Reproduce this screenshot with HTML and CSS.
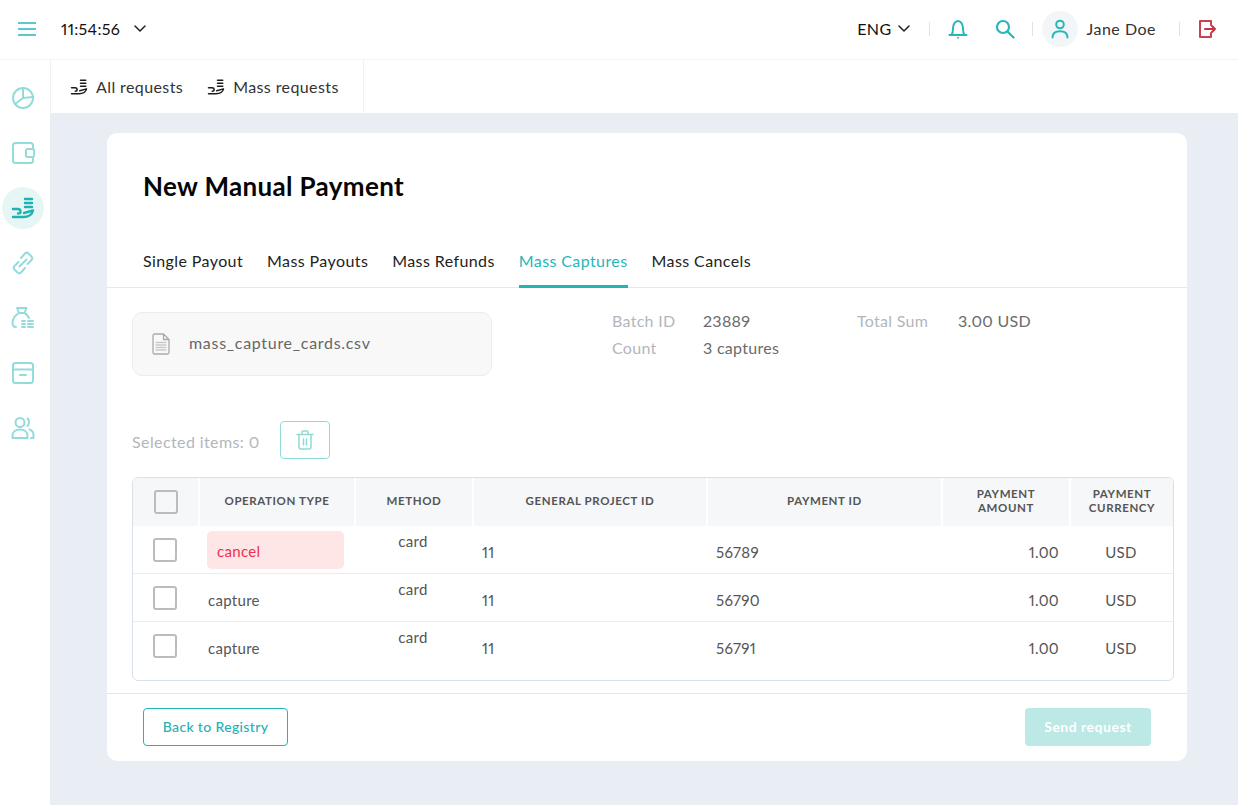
FILE: index.html
```html
<!DOCTYPE html>
<html lang="en">
<head>
<meta charset="UTF-8">
<title>New Manual Payment</title>
<link rel="stylesheet" href="styles.css">
</head>
<body>
<header class="topbar">
  <div class="topbar-left">
    <svg class="burger" width="18" height="14" viewBox="0 0 18 14"><path d="M0 1h18M0 7h18M0 13h18"/></svg>
    <span class="clock">11:54:56</span>
    <svg class="chev" width="12" height="7" viewBox="0 0 12 7"><path d="M1 1l5 5 5-5"/></svg>
  </div>
  <div class="topbar-right">
    <span class="lang">ENG</span>
    <svg class="chev chev-lang" width="12" height="7" viewBox="0 0 12 7"><path d="M1 1l5 5 5-5"/></svg>
    <span class="sep sep-a"></span>
    <svg class="ico-bell" width="20" height="20" viewBox="0 0 20 20"><path d="M1.5 16h17M3.5 16c1.5-2 1.5-3 1.5-6.500C5 5.500 7 2 10 2s5 3.500 5 7.500c0 3.500 0 4.500 1.500 6.500"/><circle class="dot" cx="10" cy="18.800" r="1"/></svg>
    <svg class="ico-search" width="20" height="20" viewBox="0 0 20 20"><circle cx="8" cy="8" r="6"/><path d="M12.500 12.500l6 6"/></svg>
    <span class="sep sep-b"></span>
    <span class="avatar">
      <svg width="18" height="20" viewBox="0 0 18 20"><circle cx="9" cy="5.500" r="3.800"/><path d="M1.500 18.500c0-4 3-6.200 7.500-6.200s7.500 2.200 7.500 6.200"/></svg>
    </span>
    <span class="user">Jane Doe</span>
    <span class="sep sep-c"></span>
    <svg class="ico-exit" width="17" height="18" viewBox="0 0 17 18"><path d="M12 5V1H1v16h11v-4"/><path class="arrow" d="M6 9h10M13 6l3 3-3 3"/></svg>
  </div>
</header>

<div class="shell">
  <nav class="sidebar">
    <span class="side-item">
      <svg width="24" height="24" viewBox="0 0 24 24"><circle cx="12" cy="12" r="10"/><path d="M12 2v10l-8 6M12 12l10-1"/></svg>
    </span>
    <span class="side-item">
      <svg width="24" height="24" viewBox="0 0 24 24"><path d="M22 7V4.500A2.500 2.500 0 0 0 19.500 2h-15A2.500 2.500 0 0 0 2 4.500v15A2.500 2.500 0 0 0 4.500 22h15a2.500 2.500 0 0 0 2.500-2.500V17"/><rect x="15" y="8" width="8" height="8" rx="1.500"/></svg>
    </span>
    <span class="side-item active">
      <svg width="24" height="24" viewBox="0 0 24 24"><path d="M14 3h7M14 7h7M14 11h7M2 13h5c2 0 2.500 1 2.500 3 0 1-1 1.500-2.500 1.500M2 21h10c5 0 9-2 10-6.500L13 17"/></svg>
    </span>
    <span class="side-item">
      <svg width="24" height="24" viewBox="0 0 24 24"><path d="M10 7l4-4.500c1-1 2.500-1 3.500 0l3 3c1 1 1 2.500 0 3.500l-4 4M14 17l-4 4.500c-1 1-2.500 1-3.500 0l-3-3c-1-1-1-2.500 0-3.500l4-4M8.500 15.500l7-7"/></svg>
    </span>
    <span class="side-item">
      <svg width="24" height="24" viewBox="0 0 24 24"><path d="M6 2h9.500l-2 5h-5.500zM8 7C4 9.500 1.500 13.500 1.500 17c0 2.500 1.500 4 3.500 4M13.500 7c2 1 3.500 3 4.500 5M11 15h3M17 15h5M11 18h3M17 18h5M11 21h3M17 21h5"/></svg>
    </span>
    <span class="side-item">
      <svg width="24" height="24" viewBox="0 0 24 24"><rect x="2" y="2" width="20" height="20" rx="2.500"/><path d="M2 8.500h20M9 14h6"/></svg>
    </span>
    <span class="side-item">
      <svg width="24" height="24" viewBox="0 0 24 24"><circle cx="9" cy="6.500" r="4.500"/><path d="M1.500 22v-2.500c0-3.500 3-6 7.500-6s7.500 2.500 7.500 6V22zM16.500 2.500c2 1 2 6 0 7.500M18.500 13.500c2.500 1 4 3 4 5.500v3h-2.500"/></svg>
    </span>
  </nav>

  <div class="content">
    <div class="subnav">
      <div class="subnav-items">
        <a class="subnav-item">
          <svg width="18" height="18" viewBox="0 0 24 24"><path d="M14 3h7M14 7h7M14 11h7M2 13h5c2 0 2.500 1 2.500 3 0 1-1 1.500-2.500 1.500M2 21h10c5 0 9-2 10-6.500L13 17"/></svg>
          All requests
        </a>
        <a class="subnav-item">
          <svg width="18" height="18" viewBox="0 0 24 24"><path d="M14 3h7M14 7h7M14 11h7M2 13h5c2 0 2.500 1 2.500 3 0 1-1 1.500-2.500 1.500M2 21h10c5 0 9-2 10-6.500L13 17"/></svg>
          Mass requests
        </a>
      </div>
    </div>

    <main class="main">
      <section class="card">
        <h1 class="title">New Manual Payment</h1>
        <div class="tabs">
          <a class="tab">Single Payout</a>
          <a class="tab">Mass Payouts</a>
          <a class="tab">Mass Refunds</a>
          <a class="tab tab-active">Mass Captures</a>
          <a class="tab">Mass Cancels</a>
        </div>

        <div class="summary">
          <div class="file-box">
            <svg width="18" height="22" viewBox="0 0 18 22"><path d="M2.500 1h9l5.500 5.500V19.500a1.500 1.500 0 0 1-1.500 1.500h-13A1.500 1.500 0 0 1 1 19.500v-17A1.500 1.500 0 0 1 2.500 1zM11.500 1v5.500H17"/><path class="lines" d="M4 9.500h10M4 12h10M4 14.500h10M4 17h10"/></svg>
            <span class="file-name">mass_capture_cards.csv</span>
          </div>
          <dl class="meta">
            <dt>Batch ID</dt><dd>23889</dd><dt>Total Sum</dt><dd>3.00 USD</dd>
            <dt>Count</dt><dd>3 captures</dd>
          </dl>
        </div>

        <div class="selection">
          <span class="selected-count">Selected items: 0</span>
          <button class="trash-btn">
            <svg width="18" height="20" viewBox="0 0 18 20"><path d="M1 4.500h16M6 4.500V2a1 1 0 0 1 1-1h4a1 1 0 0 1 1 1v2.500M3 4.500V17a2 2 0 0 0 2 2h8a2 2 0 0 0 2-2V4.500M7.500 9v6M10.500 9v6"/></svg>
          </button>
        </div>

        <div class="table">
          <div class="thead">
            <div class="th"><span class="check"></span></div>
            <div class="th">OPERATION TYPE</div>
            <div class="th">METHOD</div>
            <div class="th">GENERAL PROJECT ID</div>
            <div class="th">PAYMENT ID</div>
            <div class="th">PAYMENT<br>AMOUNT</div>
            <div class="th">PAYMENT<br>CURRENCY</div>
          </div>
          <div class="row">
            <div class="cell-check"><span class="check"></span></div>
            <div class="cell"><span class="op op-cancel">cancel</span></div>
            <div class="cell-method">card</div>
            <div class="cell">11</div>
            <div class="cell">56789</div>
            <div class="cell cell-amount">1.00</div>
            <div class="cell cell-cur">USD</div>
          </div>
          <div class="row">
            <div class="cell-check"><span class="check"></span></div>
            <div class="cell"><span class="op">capture</span></div>
            <div class="cell-method">card</div>
            <div class="cell">11</div>
            <div class="cell">56790</div>
            <div class="cell cell-amount">1.00</div>
            <div class="cell cell-cur">USD</div>
          </div>
          <div class="row row-last">
            <div class="cell-check"><span class="check"></span></div>
            <div class="cell"><span class="op">capture</span></div>
            <div class="cell-method">card</div>
            <div class="cell">11</div>
            <div class="cell">56791</div>
            <div class="cell cell-amount">1.00</div>
            <div class="cell cell-cur">USD</div>
          </div>
        </div>

        <div class="card-foot">
          <button class="btn-back">Back to Registry</button>
          <button class="btn-send">Send request</button>
        </div>
      </section>
    </main>
  </div>
</div>
</body>
</html>
```

FILE: styles.css
```css
* {
    box-sizing: border-box;
}
html, body {
    height: 100%;
    margin: 0;
}
body {
    display: flex;
    flex-direction: column;
    height: 805px;
    overflow: hidden;
    font-family: Lato, "Liberation Sans", sans-serif;
    font-size: 15px;
    font-variant-numeric: proportional-nums;
    letter-spacing: 0.4px;
    color: #2b2b2b;
    background: #fff;
}
svg {
    fill: none;
    stroke: #26b7b9;
    stroke-width: 2;
    stroke-linecap: round;
    stroke-linejoin: round;
    flex-shrink: 0;
}

/* top bar */
.topbar {
    display: flex;
    align-items: center;
    justify-content: space-between;
    height: 60px;
    padding: 0 22px 2px 18px;
    border-bottom: 1px solid #f2f3f6;
}
.topbar-left, .topbar-right {
    display: flex;
    align-items: center;
}
.burger {
    stroke-width: 1.6;
    stroke-linecap: butt;
}
.clock {
    margin-left: 25px;
    font-size: 16px;
    letter-spacing: 0.3px;
    color: #111;
}
.chev {
    stroke: #222;
    stroke-width: 1.5;
}
.topbar-left .chev {
    margin-left: 14px;
}
.lang {
    font-size: 16px;
    color: #111;
}
.chev-lang {
    margin-left: 6px;
}
.sep {
    width: 1px;
    height: 14px;
    background: #dfe2e6;
}
.sep-a { margin: 0 18px 0 19px; }
.sep-b { margin: 0 9px 0 17px; }
.sep-c { margin: 0 19px 0 23px; }
.ico-search {
    margin-left: 27px;
    stroke-width: 2.2;
}
.dot {
    fill: #26b7b9;
    stroke: none;
}
.avatar {
    display: flex;
    align-items: center;
    justify-content: center;
    width: 36px;
    height: 36px;
    border-radius: 50%;
    background: #f3f6f8;
}
.user {
    margin-left: 9px;
    font-size: 16px;
    letter-spacing: 0.5px;
    color: #333;
}
.ico-exit {
    stroke: #c8434f;
}
.ico-exit .arrow {
    stroke: #c8343f;
}

.shell {
    display: flex;
    flex: 1;
    min-height: 0;
}
.sidebar {
    display: flex;
    flex-direction: column;
    align-items: center;
    width: 50px;
    padding-top: 17px;
    padding-right: 4px;
    gap: 13px;
    background: #fff;
}
.side-item {
    display: flex;
    align-items: center;
    justify-content: center;
    width: 42px;
    height: 42px;
}
.side-item svg {
    stroke: #93dcd9;
    stroke-width: 2;
}
.side-item.active {
    border-radius: 50%;
    background: #e6f6f5;
}
.side-item.active svg {
    stroke: #1eb3b3;
    stroke-width: 2.4;
}

.content {
    display: flex;
    flex-direction: column;
    flex: 1;
    min-width: 0;
    background: #e9edf4;
}
.subnav {
    flex-shrink: 0;
    height: 53px;
    background: #fff;
}
.subnav-items {
    display: flex;
    align-items: center;
    gap: 24px;
    width: 314px;
    height: 100%;
    padding-left: 19px;
    border-right: 1px solid #f0f1f4;
    border-left: 1px solid #f0f1f4;
}
.subnav-item {
    display: flex;
    align-items: center;
    gap: 8px;
    font-size: 16px;
    color: #333;
}
.subnav-item svg {
    stroke: #1c1c1c;
    stroke-width: 2;
}

.main {
    flex: 1;
    padding: 20px 51px 0 57px;
}
.card {
    height: 628px;
    border-radius: 10px;
    background: #fff;
}
.title {
    margin: 0;
    padding: 37px 0 0 36px;
    font-size: 26px;
    line-height: 32px;
    font-weight: 700;
    letter-spacing: 0.35px;
    color: #050505;
}

.tabs {
    display: flex;
    gap: 24px;
    height: 47px;
    margin-top: 39px;
    padding-left: 36px;
    border-bottom: 1px solid #e6e8ec;
}
.tab {
    height: 47px;
    padding-top: 10px;
    font-size: 16px;
    letter-spacing: 0.4px;
    color: #222;
}
.tab-active {
    color: #26b7b9;
    border-bottom: 3px solid #1fb6b6;
}

.summary {
    display: flex;
    align-items: flex-start;
    margin-top: 24px;
    padding-left: 25px;
}
.file-box {
    display: flex;
    align-items: center;
    gap: 19px;
    width: 360px;
    height: 64px;
    padding-left: 19px;
    border: 1px solid #ececee;
    border-radius: 10px;
    background: #f8f8f9;
    font-size: 16px;
    letter-spacing: 0.7px;
    color: #666;
}
.file-name {
    margin-bottom: 3px;
}
.file-box svg {
    stroke: #aaa;
    stroke-width: 1.3;
}
.file-box .lines {
    stroke: #c9c9c9;
}
.meta {
    display: grid;
    grid-template-columns: 91px 154px 101px auto;
    margin: 0 0 0 120px;
    row-gap: 9px;
    font-size: 16px;
    line-height: 18px;
    letter-spacing: 0.3px;
}
.meta dt {
    color: #b3b6bd;
}
.meta dd {
    margin: 0;
    color: #6b6b6b;
}

.selection {
    display: flex;
    align-items: center;
    gap: 20px;
    margin-top: 45px;
    padding-left: 25px;
    font-size: 16px;
    color: #b3b6bd;
}
.selected-count {
    margin-top: 2px;
}
.trash-btn {
    display: flex;
    align-items: center;
    justify-content: center;
    width: 50px;
    height: 38px;
    padding: 0;
    border: 1px solid #8ddcd8;
    border-radius: 4px;
    background: #fff;
}
.trash-btn svg {
    stroke: #8ddcd8;
    stroke-width: 1.5;
}

.table {
    width: 1042px;
    height: 204px;
    margin: 18px 0 0 25px;
    border: 1px solid #d8e0ea;
    border-radius: 6px;
    overflow: hidden;
}
.thead, .row {
    display: grid;
    grid-template-columns: 65px 154px 116px 232px 233px 126px 102px;
    column-gap: 2px;
}
.thead {
    height: 48px;
}
.th {
    display: flex;
    align-items: center;
    justify-content: center;
    padding-bottom: 2px;
    text-align: center;
    background: #f6f7f9;
    font-size: 11.5px;
    line-height: 14px;
    font-weight: 700;
    letter-spacing: 0.6px;
    color: #555;
}
.th .check {
    margin-top: 2px;
    background: transparent;
}
.row {
    align-items: center;
    height: 48px;
    border-bottom: 1px solid #e8edf4;
}
.row-last {
    border-bottom: none;
}
.check {
    display: block;
    width: 24px;
    height: 24px;
    border: 2px solid #bcbcbc;
    border-radius: 3px;
    background: #fff;
}
.cell-check {
    display: flex;
    justify-content: center;
    padding-right: 2px;
}
.cell {
    padding-top: 4px;
    padding-left: 8px;
    font-size: 15px;
    letter-spacing: 0.3px;
    color: #555;
}
.cell-method {
    padding-right: 2px;
    padding-bottom: 18px;
    text-align: center;
    font-size: 15px;
    letter-spacing: 0.3px;
    color: #555;
}
.op {
    display: block;
}
.op-cancel {
    width: 137px;
    height: 38px;
    margin: -4px 0 0 -1px;
    padding-left: 10px;
    line-height: 40px;
    border-radius: 5px;
    background: #fee6e6;
    color: #ef2f4d;
}
.cell-amount {
    padding-right: 10px;
    text-align: right;
}
.cell-cur {
    padding-right: 2px;
    padding-left: 0;
    text-align: center;
}

.card-foot {
    display: flex;
    justify-content: space-between;
    align-items: center;
    height: 68px;
    margin-top: 12px;
    padding: 0 36px 1px;
    border-top: 1px solid #e3e5e8;
}
.btn-back, .btn-send {
    height: 38px;
    padding-bottom: 3px;
    border-radius: 4px;
    font-family: inherit;
    font-size: 14px;
    letter-spacing: 0.35px;
}
.btn-back {
    width: 145px;
    border: 1px solid #1fb6b6;
    background: #fff;
    color: #26b0b3;
    font-weight: 500;
}
.btn-send {
    width: 126px;
    border: none;
    background: #bce8e6;
    color: #fff;
    font-weight: 700;
    letter-spacing: 0.5px;
}
```
